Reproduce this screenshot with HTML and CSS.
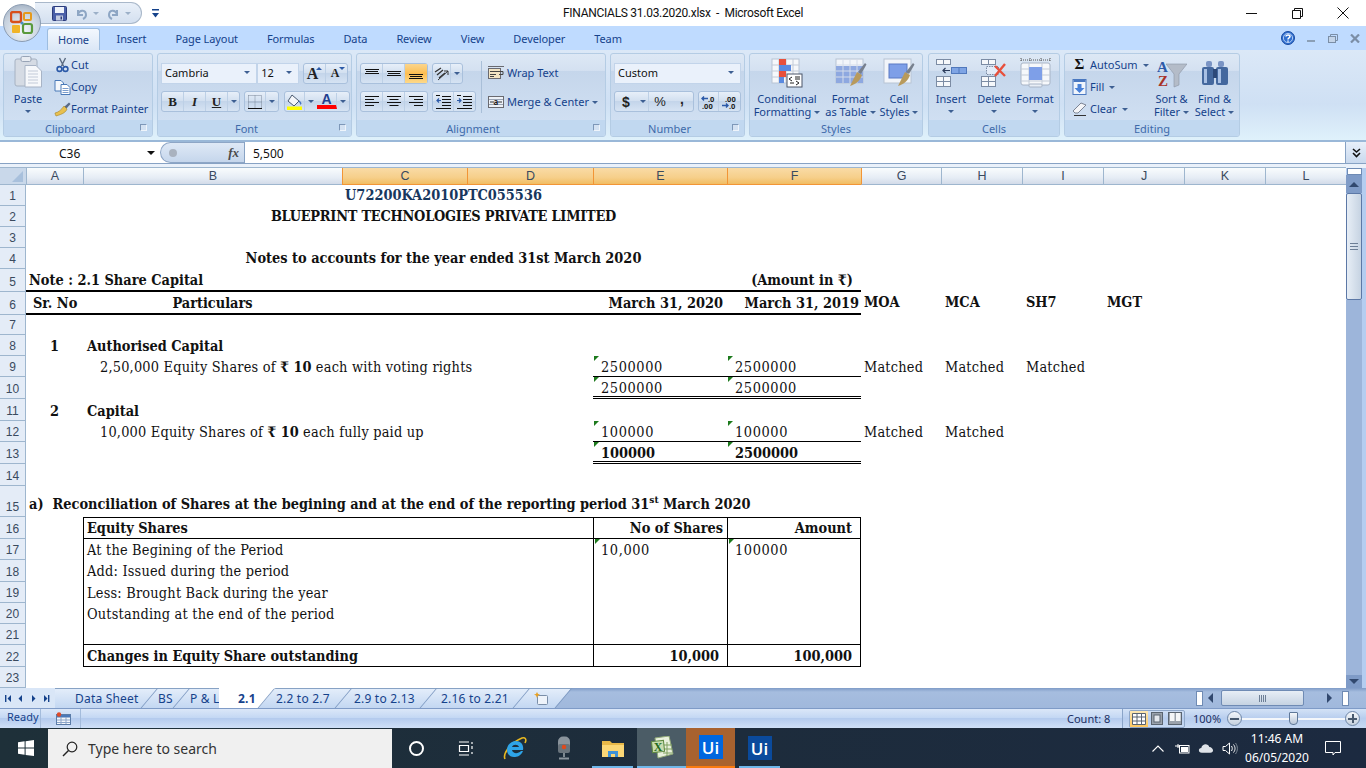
FILE: index.html
```html
<!DOCTYPE html>
<html lang="en">
<head>
  <meta charset="UTF-8" />
  <title>FINANCIALS 31.03.2020.xlsx - Microsoft Excel</title>
  <link rel="stylesheet" href="styles.css">
</head>
<body>

  <!-- Office orb sits over the title bar and the tab strip -->
  <div class="orb">
    <svg width="24" height="24" viewBox="0 0 24 24">
      <rect x="1" y="1" width="10" height="10" rx="2" fill="none" stroke="#d8501c" stroke-width="2.4"/>
      <rect x="14" y="2" width="7" height="7" rx="1" fill="none" stroke="#e59a1c" stroke-width="2"/>
      <rect x="2" y="14" width="8" height="8" rx="1" fill="#f0b428"/>
      <rect x="13" y="13" width="9" height="9" rx="2" fill="none" stroke="#5a9a3c" stroke-width="2.2"/>
      <circle cx="12" cy="12" r="1.6" fill="#4a8fc4"/>
    </svg>
  </div>

  <header class="titlebar">
    <div class="qat-wrap">
      <div class="qat">
        <svg width="15" height="15" viewBox="0 0 15 15"><rect x="0.5" y="0.5" width="14" height="14" rx="1" fill="#4a5fa8" stroke="#2c3c7c"/><rect x="3" y="1" width="9" height="6" fill="#eef2fa"/><rect x="4" y="9.5" width="7" height="5" fill="#c4cce0"/><rect x="8.5" y="10.5" width="1.5" height="3" fill="#2c3c7c"/></svg>
        <svg class="qat-dim" width="13" height="13" viewBox="0 0 13 13"><path d="M3 3 L3 8 L8 8 M3 7 C5 2 11 3 11 8 C11 10 10 11 8 12" fill="none" stroke="#8ea6c4" stroke-width="2"/></svg>
        <span class="caret caret-dim"></span>
        <svg class="qat-dim" width="13" height="13" viewBox="0 0 13 13"><path d="M10 3 L10 8 L5 8 M10 7 C8 2 2 3 2 8 C2 10 3 11 5 12" fill="none" stroke="#8ea6c4" stroke-width="2"/></svg>
        <span class="caret caret-dim"></span>
      </div>
      <svg class="qat-more" width="7" height="9" viewBox="0 0 7 9"><rect x="0" y="0" width="7" height="1.5" fill="#15428b"/><path d="M0 4 H7 L3.5 8.5 Z" fill="#15428b"/></svg>
    </div>
    <div class="doc-title">FINANCIALS 31.03.2020.xlsx &nbsp;-&nbsp; Microsoft Excel</div>
    <div class="win-controls">
      <span class="win-btn"><svg width="11" height="11" viewBox="0 0 11 11"><path d="M0 5.5 H11" stroke="#111" stroke-width="1"/></svg></span>
      <span class="win-btn"><svg width="11" height="11" viewBox="0 0 11 11"><path d="M0.5 2.5 H8.5 V10.5 H0.5 Z M2.5 2.5 V0.5 H10.5 V8.5 H8.5" fill="none" stroke="#111"/></svg></span>
      <span class="win-btn"><svg width="12" height="12" viewBox="0 0 12 12"><path d="M0.5 0.5 L11.5 11.5 M11.5 0.5 L0.5 11.5" stroke="#111"/></svg></span>
    </div>
  </header>

  <nav class="tabstrip">
    <span class="tab tab-active">Home</span>
    <span class="tab">Insert</span>
    <span class="tab">Page Layout</span>
    <span class="tab">Formulas</span>
    <span class="tab">Data</span>
    <span class="tab">Review</span>
    <span class="tab">View</span>
    <span class="tab">Developer</span>
    <span class="tab">Team</span>
    <div class="doc-controls">
      <svg width="14" height="14" viewBox="0 0 14 14"><circle cx="7" cy="7" r="6.5" fill="#2f6fd0" stroke="#1a4aa0"/><circle cx="7" cy="7" r="4.6" fill="none" stroke="#cfe0fa" stroke-width="0.8"/><path d="M5 5.4 C5 3.6 9 3.6 9 5.6 C9 7 7 6.8 7 8.4 M7 9.6 V10.8" fill="none" stroke="#fff" stroke-width="1.5"/></svg>
      <svg width="9" height="9" viewBox="0 0 9 9"><rect x="0" y="6" width="8" height="2" fill="#8b9fb6"/></svg>
      <svg width="10" height="9" viewBox="0 0 10 9"><rect x="0.5" y="2.5" width="7" height="6" fill="#c4d4e8" stroke="#7b8ea6"/><path d="M2.5 2.5 V0.5 H9.5 V6.5 H7.5" fill="none" stroke="#7b8ea6"/></svg>
      <svg width="10" height="9" viewBox="0 0 10 9"><path d="M1 0.5 L9 8.5 M9 0.5 L1 8.5" stroke="#7b8ea6" stroke-width="2.2"/></svg>
    </div>
  </nav>

  <section class="ribbon">

    <div class="group g-clipboard">
      <div class="group-body">
        <div class="large-btn paste-btn">
          <svg width="28" height="32" viewBox="0 0 28 32">
            <rect x="1" y="3" width="22" height="27" rx="2" fill="#d5dbe4" stroke="#a6b2c2"/>
            <rect x="7" y="0.5" width="10" height="5" rx="1.5" fill="#e8ecf2" stroke="#98a4b6"/>
            <path d="M11 9.5 H22 L27.5 15 V31 H11 Z" fill="#f6f8fb" stroke="#a8b4c6"/>
            <path d="M14 15 H24 M14 18 H24 M14 21 H24 M14 24 H24 M14 27 H24" stroke="#c2cad8"/>
          </svg>
          <span class="large-label">Paste</span>
          <span class="caret"></span>
        </div>
        <div class="small-col clip-col">
          <div class="small-btn">
            <svg width="14" height="16" viewBox="0 0 14 16"><path d="M4 1 L8 9 M10 1 L6 9" stroke="#5a6a80" stroke-width="1.4"/><circle cx="4" cy="12" r="2.4" fill="none" stroke="#2c5aa8" stroke-width="1.6"/><circle cx="10" cy="12" r="2.4" fill="none" stroke="#2c5aa8" stroke-width="1.6"/></svg>
            <span>Cut</span>
          </div>
          <div class="small-btn">
            <svg width="16" height="15" viewBox="0 0 16 15"><path d="M0.5 0.5 H6.5 L9 3 V11 H0.5 Z" fill="#f4f7fb" stroke="#4a7ab8"/><path d="M6.5 4.5 H12.5 L15.5 7.5 V14.5 H6.5 Z" fill="#fff" stroke="#4a7ab8"/><path d="M8 8.5 H14 M8 10.5 H14 M8 12.5 H14" stroke="#7a9ccc"/></svg>
            <span>Copy</span>
          </div>
          <div class="small-btn">
            <svg width="17" height="15" viewBox="0 0 17 15"><path d="M10 5 L15 0.5 L16.5 2 L12 7 Z" fill="#586a88"/><path d="M10 4 L13 7 C12 10 9 12 2 14 C1 12 1 11 1 11 C5 10 7 8 10 4 Z" fill="#e8c050" stroke="#a48428" stroke-width="0.6"/></svg>
            <span>Format Painter</span>
          </div>
        </div>
      </div>
      <div class="caption cap-l">Clipboard<span class="launcher"></span></div>
    </div>

    <div class="group g-font">
      <div class="group-body stack">
        <div class="row">
          <div class="select font-name"><span>Cambria</span><span class="caret"></span></div>
          <div class="select font-size"><span>12</span><span class="caret"></span></div>
          <div class="btn-set size-set">
            <span class="tool grow-a">A<i class="mini-up"></i></span>
            <span class="tool shrink-a">A<i class="mini-down"></i></span>
          </div>
        </div>
        <div class="row">
          <div class="btn-set biu-set">
            <span class="tool bold-b">B</span>
            <span class="tool italic-i">I</span>
            <span class="tool under-u">U</span>
            <span class="tool-caret"><span class="caret"></span></span>
          </div>
          <div class="btn-set border-set">
            <span class="tool">
              <svg width="14" height="14" viewBox="0 0 14 14"><path d="M0.5 0.5 H13.5 V13.5 M0.5 0.5 V13.5 M7 0.5 V13.5 M0.5 7 H13.5" fill="none" stroke="#7a8698" stroke-dasharray="1 1"/><path d="M0 13.5 H14" stroke="#111"/></svg>
            </span>
            <span class="tool-caret"><span class="caret"></span></span>
          </div>
          <div class="btn-set color-set">
            <span class="tool">
              <svg width="17" height="16" viewBox="0 0 17 16"><path d="M6 1 L13 7 L8 12 L2 7 Z" fill="#f4f6fa" stroke="#4a5a70"/><path d="M13 7 C15 9 15 10 14 10" fill="none" stroke="#4a78c0" stroke-width="1.6"/><rect x="1" y="12.5" width="15" height="3.5" fill="#ffff00"/></svg>
            </span>
            <span class="tool-caret"><span class="caret"></span></span>
            <span class="tool font-color">A</span>
            <span class="tool-caret"><span class="caret"></span></span>
          </div>
        </div>
      </div>
      <div class="caption cap-l">Font<span class="launcher"></span></div>
    </div>

    <div class="group g-align">
      <div class="group-body align-body">
        <div class="stack align-stack">
          <div class="row">
            <div class="btn-set">
              <span class="tool line-tool"><svg width="14" height="12" viewBox="0 0 14 12"><path d="M0 1.5 H14 M1 3.5 H13 M0 5.5 H14" stroke="#111"/></svg></span>
              <span class="tool line-tool"><svg width="14" height="12" viewBox="0 0 14 12"><path d="M0 3.5 H14 M1 5.5 H13 M0 7.5 H14" stroke="#111"/></svg></span>
              <span class="tool line-tool tool-on"><svg width="14" height="12" viewBox="0 0 14 12"><path d="M0 6.5 H14 M1 8.5 H13 M0 10.5 H14" stroke="#111"/></svg></span>
            </div>
            <div class="btn-set orient-set">
              <span class="tool"><svg width="15" height="14" viewBox="0 0 15 14"><path d="M1 5 L7 1 M3 8 L9 3 M5 11 L11 6" stroke="#333" stroke-width="1.3"/><path d="M4 13 L14 4 M14 4 H10 M14 4 V8" fill="none" stroke="#333"/></svg></span>
              <span class="tool-caret"><span class="caret"></span></span>
            </div>
          </div>
          <div class="row">
            <div class="btn-set">
              <span class="tool line-tool"><svg width="14" height="12" viewBox="0 0 14 12"><path d="M0 0.5 H14 M0 3.5 H9 M0 6.5 H14 M0 9.5 H9" stroke="#111"/></svg></span>
              <span class="tool line-tool"><svg width="14" height="12" viewBox="0 0 14 12"><path d="M0 0.5 H14 M2.5 3.5 H11.5 M0 6.5 H14 M2.5 9.5 H11.5" stroke="#111"/></svg></span>
              <span class="tool line-tool"><svg width="14" height="12" viewBox="0 0 14 12"><path d="M0 0.5 H14 M5 3.5 H14 M0 6.5 H14 M5 9.5 H14" stroke="#111"/></svg></span>
            </div>
            <div class="btn-set indent-set">
              <span class="tool"><svg width="15" height="14" viewBox="0 0 15 14"><path d="M6 1.5 H15 M6 4.5 H15 M6 7.5 H15 M6 10.5 H15 M0 13.5 H15 M0 0.5 H4" stroke="#111"/><path d="M5 5.5 H1 M3 3.5 L1 5.5 L3 7.5" fill="none" stroke="#2c5aa8" stroke-width="1.2"/></svg></span>
              <span class="tool"><svg width="15" height="14" viewBox="0 0 15 14"><path d="M6 1.5 H15 M6 4.5 H15 M6 7.5 H15 M6 10.5 H15 M0 13.5 H15 M0 0.5 H4" stroke="#111"/><path d="M0 5.5 H4 M2 3.5 L4 5.5 L2 7.5" fill="none" stroke="#2c5aa8" stroke-width="1.2"/></svg></span>
            </div>
          </div>
        </div>
        <div class="vsep"></div>
        <div class="stack merge-stack">
          <div class="small-btn">
            <svg width="16" height="14" viewBox="0 0 16 14"><rect x="0.5" y="2.5" width="12" height="10" fill="#f2e4c4" stroke="#6a6a70"/><path d="M2 5.5 H15 V8.5 H11 M2 8.5 H8 M2 10.5 H6" fill="none" stroke="#444"/><path d="M0 0.5 H16" stroke="#6a6a70"/></svg>
            <span>Wrap Text</span>
          </div>
          <div class="small-btn">
            <svg width="16" height="14" viewBox="0 0 16 14"><rect x="0.5" y="1.5" width="15" height="11" fill="#eef2f8" stroke="#6a6a70"/><path d="M1 4.5 H15 M1 9.5 H15" stroke="#9aa4b4"/><path d="M2 7 H6 M10 7 H14" stroke="#333"/><text x="8" y="10" font-size="8" font-weight="700" text-anchor="middle" fill="#222">a</text></svg>
            <span>Merge &amp; Center</span>
            <span class="caret"></span>
          </div>
        </div>
      </div>
      <div class="caption cap-l">Alignment<span class="launcher"></span></div>
    </div>

    <div class="group g-number">
      <div class="group-body stack">
        <div class="row">
          <div class="select number-format"><span>Custom</span><span class="caret"></span></div>
        </div>
        <div class="row">
          <div class="btn-set money-set">
            <span class="tool money">$</span>
            <span class="tool-caret"><span class="caret"></span></span>
            <span class="tool money percent">%</span>
            <span class="tool money comma">,</span>
          </div>
          <div class="btn-set dec-set">
            <span class="tool"><svg width="16" height="14" viewBox="0 0 16 14"><path d="M7 3.5 H1 M3 1.5 L1 3.5 L3 5.5" fill="none" stroke="#2c5aa8" stroke-width="1.4"/><text x="7" y="6.5" font-size="7.5" font-weight="700" fill="#222">.0</text><text x="1" y="13.5" font-size="7.5" font-weight="700" fill="#222">.00</text></svg></span>
            <span class="tool"><svg width="16" height="14" viewBox="0 0 16 14"><path d="M1 10.5 H7 M5 8.5 L7 10.5 L5 12.5" fill="none" stroke="#2c5aa8" stroke-width="1.4"/><text x="4" y="6.5" font-size="7.5" font-weight="700" fill="#222">.00</text><text x="8" y="13.5" font-size="7.5" font-weight="700" fill="#222">.0</text></svg></span>
          </div>
        </div>
      </div>
      <div class="caption cap-l">Number<span class="launcher"></span></div>
    </div>

    <div class="group g-styles">
      <div class="group-body wide-row">
        <div class="large-btn w-cond">
          <svg width="32" height="30" viewBox="0 0 32 30">
            <rect x="1" y="1" width="27" height="24" fill="#f6f8fb" stroke="#b8c4d4"/>
            <path d="M1 7 H28 M1 13 H28 M1 19 H28 M8 1 V25 M15 1 V25 M22 1 V25" stroke="#c4ccd8"/>
            <rect x="8" y="1" width="7" height="6" fill="#e8503c"/>
            <rect x="8" y="7" width="12" height="6" fill="#5a8ae0"/>
            <rect x="8" y="13" width="7" height="6" fill="#e8503c"/>
            <rect x="8" y="19" width="5" height="6" fill="#5a8ae0"/>
            <rect x="16" y="16" width="15" height="13" fill="#fff" stroke="#4a5568"/>
            <path d="M21 19 L18 21 L21 23 M19 25 H23 M24 19 H29 M24 21 H29 M25 23 L28 25 L25 27" fill="none" stroke="#222"/>
          </svg>
          <span class="large-label">Conditional<br>Formatting<span class="caret"></span></span>
        </div>
        <div class="large-btn w-table">
          <svg width="32" height="30" viewBox="0 0 32 30">
            <rect x="1" y="1" width="27" height="24" fill="#f2f5fa" stroke="#b8c4d4"/>
            <rect x="1" y="8" width="27" height="17" fill="#8ea8e0"/>
            <path d="M1 7 H28 M1 13 H28 M1 19 H28 M8 1 V25 M15 1 V25 M22 1 V25" stroke="#d4dcea"/>
            <path d="M23 14 L30 5 L31.5 6.5 L26 16 Z" fill="#77808e"/>
            <path d="M22 14 L27 17 C25 23 21 26 15 28 C17 24 19 20 22 14 Z" fill="#b89a5c"/>
          </svg>
          <span class="large-label">Format<br>as Table<span class="caret"></span></span>
        </div>
        <div class="large-btn w-cell">
          <svg width="32" height="30" viewBox="0 0 32 30">
            <rect x="1" y="1" width="27" height="24" fill="#f2f5fa" stroke="#b8c4d4"/>
            <rect x="6" y="6" width="18" height="14" fill="#7e9fe8" stroke="#5a7ac4"/>
            <path d="M23 14 L30 5 L31.5 6.5 L26 16 Z" fill="#77808e"/>
            <path d="M22 14 L27 17 C25 23 21 26 15 28 C17 24 19 20 22 14 Z" fill="#b89a5c"/>
          </svg>
          <span class="large-label">Cell<br>Styles<span class="caret"></span></span>
        </div>
      </div>
      <div class="caption">Styles</div>
    </div>

    <div class="group g-cells">
      <div class="group-body cells-row">
        <div class="large-btn w-ins">
          <svg width="31" height="28" viewBox="0 0 31 28">
            <rect x="0.5" y="0.5" width="14" height="5" fill="#f6f8fb" stroke="#7c8ca4"/><path d="M7.5 0.5 V5.5" stroke="#7c8ca4"/>
            <rect x="0.5" y="17.5" width="14" height="10" fill="#f6f8fb" stroke="#7c8ca4"/><path d="M7.5 17.5 V27.5 M0.5 22.5 H14.5" stroke="#7c8ca4"/>
            <rect x="15.5" y="8.5" width="15" height="6" fill="#7ea4e4" stroke="#5078bc"/><path d="M23 8.5 V14.5" stroke="#5078bc"/>
            <path d="M14 11.5 H7 M9.5 9 L7 11.5 L9.5 14" fill="none" stroke="#2a3a5a" stroke-width="1.2"/>
          </svg>
          <span class="large-label">Insert</span>
          <span class="caret"></span>
        </div>
        <div class="large-btn w-del">
          <svg width="26" height="28" viewBox="0 0 26 28">
            <rect x="0.5" y="0.5" width="14" height="5" fill="#f6f8fb" stroke="#7c8ca4"/><path d="M7.5 0.5 V5.5" stroke="#7c8ca4"/>
            <rect x="5.5" y="7.5" width="12" height="8" fill="#e4ecf8" stroke="#7c8ca4" stroke-dasharray="1.5 1"/>
            <rect x="0.5" y="17.5" width="14" height="10" fill="#f6f8fb" stroke="#7c8ca4"/><path d="M7.5 17.5 V27.5 M0.5 22.5 H14.5" stroke="#7c8ca4"/>
            <path d="M14 7 L24 17 M24 5 L14 17" stroke="#e8503c" stroke-width="2.4"/>
          </svg>
          <span class="large-label">Delete</span>
          <span class="caret"></span>
        </div>
        <div class="large-btn w-fmt">
          <svg width="31" height="30" viewBox="0 0 31 30">
            <path d="M1 2 H30 M1 0 V4 M30 0 V4 M10 0 V4 M21 0 V4" stroke="#555" stroke-dasharray="1 1"/>
            <rect x="1" y="5" width="29" height="22" rx="2" fill="#f6f8fb" stroke="#a8b4c6"/>
            <path d="M1 11 H30 M1 17 H30 M1 23 H30 M9 5 V27 M22 5 V27" stroke="#c4ccd8"/>
            <rect x="9" y="9" width="13" height="13" fill="#7e9fe8"/>
            <rect x="9" y="26" width="13" height="3" rx="1" fill="#e8eef6" stroke="#a8b4c6"/>
          </svg>
          <span class="large-label">Format</span>
          <span class="caret"></span>
        </div>
      </div>
      <div class="caption">Cells</div>
    </div>

    <div class="group g-edit">
      <div class="group-body edit-body">
        <div class="small-col edit-col">
          <div class="small-btn"><span class="sigma">Σ</span><span>AutoSum</span><span class="caret"></span></div>
          <div class="small-btn">
            <svg width="14" height="16" viewBox="0 0 14 16"><rect x="0.5" y="0.5" width="13" height="15" fill="#f0f5fc" stroke="#4a78c0"/><rect x="1" y="1" width="12" height="2" fill="#4a78c0"/><path d="M5 5 H9 V9 H12 L7 14 L2 9 H5 Z" fill="#4a82d8"/></svg>
            <span>Fill</span><span class="caret"></span>
          </div>
          <div class="small-btn">
            <svg width="15" height="14" viewBox="0 0 15 14"><path d="M1 9 L9 1 L14 3 L6 11 L3 11 Z" fill="#f4f5f8" stroke="#7c8494"/><path d="M2 13.5 H14" stroke="#333"/></svg>
            <span>Clear</span><span class="caret"></span>
          </div>
        </div>
        <div class="large-btn w-sort">
          <svg width="30" height="30" viewBox="0 0 30 30">
            <path d="M9 6 H30 L22 16 V27 L17 29 V16 Z" fill="#b4bcc8" stroke="#8a94a4" stroke-width="0.6"/>
            <text x="0" y="14" font-family="Liberation Serif" font-size="15" font-weight="700" fill="#2c5aa8">A</text>
            <text x="1" y="28" font-family="Liberation Serif" font-size="15" font-weight="700" fill="#a83228">Z</text>
          </svg>
          <span class="large-label">Sort &amp;<br>Filter<span class="caret"></span></span>
        </div>
        <div class="large-btn w-find">
          <svg width="28" height="26" viewBox="0 0 28 26">
            <rect x="5" y="1" width="6" height="6" rx="2" fill="#7a94c4"/><rect x="17" y="1" width="6" height="6" rx="2" fill="#7a94c4"/>
            <rect x="1" y="7" width="12" height="18" rx="2" fill="#44689e"/><rect x="15" y="7" width="12" height="18" rx="2" fill="#44689e"/>
            <rect x="3" y="9" width="3" height="14" fill="#a8c0e4"/><rect x="17" y="9" width="3" height="14" fill="#a8c0e4"/>
            <rect x="12" y="9" width="4" height="9" fill="#2c4878"/>
          </svg>
          <span class="large-label">Find &amp;<br>Select<span class="caret"></span></span>
        </div>
      </div>
      <div class="caption">Editing</div>
    </div>
  </section>

  <section class="formula-bar">
    <div class="name-box"><span class="name-text">C36</span><span class="name-caret"></span></div>
    <div class="fx-pill">
      <span class="fx-dot"></span>
      <span class="fx">fx</span>
    </div>
    <div class="formula-input">5,500</div>
    <div class="formula-expand">
      <svg width="9" height="10" viewBox="0 0 9 10"><path d="M1 1 L4.5 4 L8 1 M1 5 L4.5 8.5 L8 5" fill="none" stroke="#111" stroke-width="1.6"/></svg>
    </div>
  </section>

  <main class="sheet-wrap">
    <div class="sheet-clip">
      <table class="sheet">
        <colgroup>
          <col class="col-rh"><col class="col-a"><col class="col-b"><col class="col-c"><col class="col-d"><col class="col-e"><col class="col-e">
          <col class="col-g1"><col class="col-g"><col class="col-g"><col class="col-g"><col class="col-g"><col class="col-g">
        </colgroup>
        <thead>
          <tr>
            <th class="corner"><span class="corner-mark"></span></th>
            <th>A</th><th>B</th>
            <th class="sel">C</th><th class="sel">D</th><th class="sel">E</th><th class="sel">F</th>
            <th class="sel-end">G</th><th>H</th><th>I</th><th>J</th><th>K</th><th>L</th>
          </tr>
        </thead>
        <tbody>
          <tr class="up"><th>1</th><td colspan="6" class="center bold navy">U72200KA2010PTC055536</td></tr>
          <tr class="up"><th>2</th><td colspan="6" class="center bold caps">BLUEPRINT TECHNOLOGIES PRIVATE LIMITED</td></tr>
          <tr><th>3</th></tr>
          <tr class="up"><th>4</th><td colspan="6" class="center bold">Notes to accounts for the year ended 31st March 2020</td></tr>
          <tr class="h23"><th>5</th><td colspan="5" class="bold thick note">Note : 2.1 Share Capital</td><td class="bold thick right amount">(Amount in ₹)</td></tr>
          <tr class="h23">
            <th>6</th>
            <td class="bold thick srno">Sr. No</td>
            <td class="bold thick center">Particulars</td>
            <td class="thick"></td><td class="thick"></td>
            <td class="bold thick right">March 31, 2020</td>
            <td class="bold thick right tight">March 31, 2019</td>
            <td class="bold lift gcol">MOA</td><td class="bold lift">MCA</td><td class="bold lift">SH7</td><td class="bold lift">MGT</td>
          </tr>
          <tr class="h20"><th>7</th></tr>
          <tr><th>8</th><td class="bold center">1</td><td class="bold">Authorised Capital</td></tr>
          <tr>
            <th>9</th><td></td>
            <td class="indent">2,50,000 Equity Shares of <b>₹ 10</b> each with voting rights</td>
            <td></td><td></td>
            <td class="num flag line">2500000</td><td class="num flag line">2500000</td>
            <td class="gcol">Matched</td><td>Matched</td><td>Matched</td>
          </tr>
          <tr class="h22"><th>10</th><td colspan="4"></td><td class="num flag dbl">2500000</td><td class="num flag dbl">2500000</td></tr>
          <tr class="h22"><th>11</th><td class="bold center">2</td><td class="bold">Capital</td></tr>
          <tr>
            <th>12</th><td></td>
            <td class="indent">10,000 Equity Shares of <b>₹ 10</b> each fully paid up</td>
            <td></td><td></td>
            <td class="num flag line">100000</td><td class="num flag line">100000</td>
            <td class="gcol">Matched</td><td>Matched</td>
          </tr>
          <tr class="h22"><th>13</th><td colspan="4"></td><td class="num flag dbl bold">100000</td><td class="num flag dbl bold">2500000</td></tr>
          <tr class="h22"><th>14</th></tr>
          <tr class="h31"><th>15</th><td colspan="12" class="bold note recon-title">a)&nbsp; Reconciliation of Shares at the begining and at the end of the reporting period 31<sup>st</sup> March 2020</td></tr>
          <tr class="h22 recon-head">
            <th>16</th><td></td>
            <td colspan="3" class="lead bold">Equity Shares</td>
            <td class="mid bold right">No of Shares</td>
            <td class="end bold right amount">Amount</td>
          </tr>
          <tr>
            <th>17</th><td></td>
            <td colspan="3" class="lead">At the Begining of the Period</td>
            <td class="mid num flag">10,000</td>
            <td class="end num flag">100000</td>
          </tr>
          <tr class="h22 up"><th>18</th><td></td><td colspan="3" class="lead">Add: Issued during the period</td><td class="mid"></td><td class="end"></td></tr>
          <tr><th>19</th><td></td><td colspan="3" class="lead">Less: Brought Back during the year</td><td class="mid"></td><td class="end"></td></tr>
          <tr><th>20</th><td></td><td colspan="3" class="lead">Outstanding at the end of the period</td><td class="mid"></td><td class="end"></td></tr>
          <tr class="recon-rule"><th>21</th><td></td><td colspan="3" class="lead"></td><td class="mid"></td><td class="end"></td></tr>
          <tr class="h22 recon-rule">
            <th>22</th><td></td>
            <td colspan="3" class="lead bold">Changes in Equity Share outstanding</td>
            <td class="mid bold right amount">10,000</td>
            <td class="end bold right amount">100,000</td>
          </tr>
          <tr><th>23</th></tr>
        </tbody>
      </table>
    </div>

    <aside class="vscroll">
      <span class="v-split"></span>
      <span class="v-arrow"><i class="arrow-up"></i></span>
      <span class="v-thumb"><i class="grip"></i></span>
      <span class="v-track"></span>
      <span class="v-arrow v-arrow-down"><i class="arrow-down"></i></span>
    </aside>
  </main>

  <section class="sheetbar">
    <div class="sheet-nav">
      <svg width="50" height="9" viewBox="0 0 50 9" fill="#15428b"><rect x="5" y="1" width="1.4" height="7"/><path d="M11 1 V8 L7.5 4.5 Z M22 1 V8 L18.5 4.5 Z M32 1 V8 L35.5 4.5 Z M44 1 V8 L47.5 4.5 Z"/><rect x="48" y="1" width="1.4" height="7"/></svg>
    </div>
    <div class="sheet-tabs">
      <span class="sheet-tab st-data">Data Sheet</span>
      <span class="sheet-tab st-bs">BS</span>
      <span class="sheet-tab st-pl">P &amp; L</span>
      <span class="sheet-tab sheet-tab-on">2.1</span>
      <span class="sheet-tab st-22">2.2 to 2.7</span>
      <span class="sheet-tab st-29">2.9 to 2.13</span>
      <span class="sheet-tab st-216">2.16 to 2.21</span>
      <span class="sheet-tab st-new">
        <svg width="14" height="13" viewBox="0 0 14 13"><rect x="3.5" y="3.5" width="10" height="9" rx="1" fill="#eef3fa" stroke="#7a8ea8"/><path d="M3 0 L4 2 L6 2.5 L4 3.5 L3 6 L2 3.5 L0 2.5 L2 2 Z" fill="#e8a020"/></svg>
      </span>
    </div>
    <div class="hscroll">
      <span class="h-split"></span>
      <i class="arrow-left"></i>
      <span class="h-thumb"><i class="grip-v"></i></span>
      <i class="arrow-right"></i>
      <span class="h-split"></span>
    </div>
  </section>

  <footer class="statusbar">
    <span class="st-ready">Ready</span>
    <span class="st-macro">
      <svg width="15" height="13" viewBox="0 0 15 13"><rect x="0.5" y="2.5" width="14" height="10" fill="#f4f7fb" stroke="#5a7ca8"/><rect x="1" y="3" width="13" height="2.5" fill="#4a78b8"/><path d="M1 8 H14 M1 10.5 H14 M5 5 V12 M10 5 V12" stroke="#8aa4c8"/><circle cx="3" cy="2.5" r="2.2" fill="#e04a28"/></svg>
    </span>
    <span class="st-count">Count: 8</span>
    <div class="st-right">
      <div class="views">
        <span class="view view-on"><svg width="14" height="12" viewBox="0 0 14 12"><path d="M0.5 0.5 H13.5 V11.5 H0.5 Z M0.5 4 H13.5 M0.5 8 H13.5 M5 0.5 V11.5 M9.5 0.5 V11.5" fill="#fff" stroke="#5a6470"/></svg></span>
        <span class="view"><svg width="12" height="13" viewBox="0 0 12 13"><rect x="0.5" y="0.5" width="11" height="12" fill="#9aa2ac" stroke="#5a6470"/><rect x="3" y="3" width="6" height="7" fill="#e4e8ee" stroke="#5a6470"/></svg></span>
        <span class="view"><svg width="14" height="13" viewBox="0 0 14 13"><rect x="0.5" y="0.5" width="13" height="12" fill="#9aa2ac" stroke="#5a6470"/><rect x="2" y="1" width="4.5" height="8" fill="#f4f6f8"/><rect x="8" y="1" width="4.5" height="8" fill="#f4f6f8"/></svg></span>
      </div>
      <span class="zoom-pct">100%</span>
      <span class="zoom-btn"><i></i></span>
      <span class="zoom-track"><span class="zoom-thumb"></span></span>
      <span class="zoom-btn zoom-plus"><i></i></span>
    </div>
  </footer>

  <footer class="taskbar">
    <span class="tb-start">
      <svg width="16" height="16" viewBox="0 0 16 16" fill="#fff"><path d="M0 2.3 L6.6 1.3 V7.6 H0 Z M7.6 1.2 L16 0 V7.6 H7.6 Z M0 8.5 H6.6 V14.8 L0 13.8 Z M7.6 8.5 H16 V16 L7.6 14.9 Z"/></svg>
    </span>
    <div class="tb-search">
      <svg width="16" height="16" viewBox="0 0 16 16"><circle cx="10" cy="6" r="4.8" fill="none" stroke="#222" stroke-width="1.2"/><path d="M6.5 9.5 L1 15" stroke="#222" stroke-width="1.4"/></svg>
      <span>Type here to search</span>
    </div>
    <span class="tb-item"><i class="cortana-ring"></i></span>
    <span class="tb-item">
      <svg width="16" height="15" viewBox="0 0 16 15"><path d="M1 1 H11 M1 14 H11 M1.5 4.5 H10.5 V10.5 H1.5 Z M14 1 V3 M14 5 V8 M14 11 V13" fill="none" stroke="#fff" stroke-width="1.2"/></svg>
    </span>
    <span class="tb-item">
      <svg width="24" height="24" viewBox="0 0 24 24"><path d="M2 23 C0 19 5 8 19 2 C22 1 24 3 22 7" fill="none" stroke="#e8b820" stroke-width="1.6"/><path d="M4 14 C4 8 9 5 13 5 C18 5 21 9 20 14 H9 C10 18 15 18 18 15 H20 C18 20 14 21 11 21 C7 21 4 18 4 14 Z M9 11 H16 C15 8 10 8 9 11 Z" fill="#2ea4e8" fill-rule="evenodd"/></svg>
    </span>
    <span class="tb-item">
      <svg width="14" height="24" viewBox="0 0 14 24"><rect x="1" y="0.5" width="12" height="16" rx="5" fill="#8a949c"/><rect x="1" y="8" width="12" height="9" rx="2" fill="#6a747c"/><circle cx="7" cy="11" r="2.2" fill="#e04a1c"/><path d="M7 17 V21 M2 22.5 H12" stroke="#8a949c" stroke-width="1.8"/></svg>
    </span>
    <span class="tb-item tb-running">
      <svg width="22" height="18" viewBox="0 0 22 18"><path d="M0 2 H8 L10 4 H22 V18 H0 Z" fill="#e8b848"/><rect x="0" y="6" width="22" height="12" fill="#fbd776"/><path d="M6 18 V12 H16 V18 H13 V15 H9 V18 Z" fill="#3f93d8"/></svg>
    </span>
    <span class="tb-item tb-running tb-excel">
      <svg width="24" height="24" viewBox="0 0 24 24"><path d="M5 2 L19 0 L23 18 L8 22 Z" fill="#e8f0dc" stroke="#90a878"/><path d="M13 9 H22 M13 13 H22 M13 17 H22 M17 6 V20" stroke="#7ea060"/><rect x="2" y="5" width="12" height="11" fill="#c8dcb0" stroke="#5f8a40" transform="rotate(-6 8 10)"/><text x="8" y="14.5" font-family="Liberation Serif" font-size="12" font-weight="700" text-anchor="middle" fill="#1f6a20">X</text></svg>
    </span>
    <span class="tb-item tb-ui-on"><span class="ui-logo">Ui</span></span>
    <span class="tb-item tb-running"><span class="ui-logo ui-dark">Ui</span></span>
    <div class="tray">
      <svg width="12" height="7" viewBox="0 0 12 7"><path d="M0.5 6.5 L6 1 L11.5 6.5" fill="none" stroke="#fff" stroke-width="1.1"/></svg>
      <svg class="tray-power" width="15" height="11" viewBox="0 0 15 11"><rect x="4.5" y="2.5" width="9.5" height="7.5" fill="none" stroke="#fff"/><rect x="6" y="4" width="7" height="5" fill="#fff"/><path d="M0 3 H4 M3 1 V5" stroke="#fff"/></svg>
      <svg class="tray-cloud" width="16" height="10" viewBox="0 0 17 10"><path d="M4 10 C0 10 0 5 3.5 5 C4.5 0 11 0 12 4 C16 4 18 10 13 10 Z" fill="#dfe3e8"/></svg>
      <svg class="tray-sound" width="16" height="13" viewBox="0 0 15 13"><path d="M0.5 4.5 H3 L7 1 V12 L3 8.5 H0.5 Z" fill="none" stroke="#fff"/><path d="M9 4 C10 5.5 10 7.5 9 9 M11 2.5 C13 5 13 8 11 10.5" fill="none" stroke="#fff"/><path d="M13 1 C15.5 4.5 15.5 8.5 13 12" fill="none" stroke="#7f8a96"/></svg>
      <div class="clock"><span>11:46 AM</span><span>06/05/2020</span></div>
      <svg class="tray-note" width="16" height="15" viewBox="0 0 16 15"><path d="M0.5 0.5 H15.5 V11.5 H10 L8 14 L8 11.5 H0.5 Z" fill="none" stroke="#fff"/></svg>
    </div>
  </footer>

</body>
</html>
```
FILE: styles.css
```css
/* Reset */
*, *::before, *::after {
  box-sizing: border-box;
}
body {
  margin: 0;
  width: 1366px;
  height: 768px;
  overflow: hidden;
  display: flex;
  flex-direction: column;
  position: relative;
  background: #fff;
  font-family: "Noto Sans", sans-serif;
  font-size: 11px;
  color: #15428b;
}
svg { display: block; flex: none; }
.caret {
  display: inline-block;
  width: 0;
  height: 0;
  border: 3px solid transparent;
  border-top: 3px solid #3d5f92;
  border-bottom: 0;
  flex: none;
}
.caret-dim { border-top-color: #9cb0c8; }

/* Title bar */
.orb {
  position: absolute;
  left: 3px;
  top: 4px;
  width: 38px;
  height: 38px;
  border-radius: 50%;
  background: radial-gradient(circle at 50% 70%, #f4f8fc, #c4cfdc 62%, #8f9fb3);
  border: 1px solid #8b9cb2;
  display: flex;
  align-items: center;
  justify-content: center;
  z-index: 3;
}
.titlebar {
  height: 26px;
  display: grid;
  grid-template-columns: 1fr auto 1fr;
  align-items: center;
  background: #fff;
  flex: none;
}
.qat-wrap { display: flex; align-items: center; }
.qat {
  margin-left: 35px;
  width: 107px;
  height: 22px;
  padding-left: 17px;
  display: flex;
  align-items: center;
  gap: 5px;
  background: linear-gradient(#e9f0f9, #d4e0f0);
  border: 1px solid #a9b8ca;
  border-left: 0;
  border-radius: 0 12px 12px 0;
}
.qat-dim { margin-left: 3px; }
.qat-more { margin-left: 10px; }
.doc-title {
  font-family: Roboto, sans-serif;
  font-size: 12px;
  letter-spacing: -0.28px;
  color: #111;
}
.win-controls { display: flex; justify-content: flex-end; }
.win-btn {
  width: 46px;
  height: 26px;
  display: flex;
  align-items: center;
  justify-content: center;
}

/* Tab strip */
.tabstrip {
  height: 24px;
  flex: none;
  display: flex;
  align-items: flex-end;
  padding-left: 47px;
  background: #bfdbff;
}
.tab {
  height: 22px;
  padding: 2px 14.5px 0;
  font-size: 11px;
  line-height: 18px;
  letter-spacing: -0.1px;
}
.tab-active {
  width: 53px;
  padding: 2px 0 0;
  text-align: center;
  margin-right: 2px;
  background: linear-gradient(#f3f8fe, #dbe7f6);
  border: 1px solid #9dbde0;
  border-bottom: 0;
  border-radius: 3px 3px 0 0;
}
.doc-controls {
  margin-left: auto;
  align-self: center;
  display: flex;
  align-items: center;
  gap: 12px;
  padding-right: 6px;
}

/* Ribbon */
.ribbon {
  height: 92px;
  flex: none;
  display: flex;
  gap: 4px;
  padding: 3px 0 3px 3px;
  background: linear-gradient(#dbe8f7, #cfe0f4 60%, #dff1fb);
  border-bottom: 2px solid #9ab8d8;
}
.group {
  display: flex;
  flex-direction: column;
  border: 1px solid #b4cce4;
  border-radius: 3px;
  background: linear-gradient(#dde8f5, #d4e1f1 20%, #c5d6eb 21%, #d3e2f4);
  overflow: hidden;
}
.g-clipboard { width: 150px; }
.g-font { width: 195px; }
.g-align { width: 250px; }
.g-number { width: 135px; }
.g-styles { width: 174px; }
.g-cells { width: 132px; margin-left: 1px; }
.g-edit { width: 176px; }
.group-body { flex: 1; display: flex; min-height: 0; }
.caption {
  height: 16px;
  flex: none;
  position: relative;
  text-align: center;
  line-height: 17px;
  color: #3e6aaa;
  background: #c1d8f0;
}
.cap-l { padding-right: 16px; }
.launcher {
  position: absolute;
  right: 5px;
  top: 4px;
  width: 7px;
  height: 7px;
  border: 1px solid #7d97b8;
  border-right-color: #eef4fb;
  border-bottom-color: #eef4fb;
  background: #d3e1f2;
}
.stack {
  flex-direction: column;
  justify-content: space-between;
  padding: 9px 3px 8px;
}
.row { display: flex; gap: 4px; height: 21px; }
.select {
  height: 21px;
  display: flex;
  align-items: center;
  justify-content: space-between;
  padding: 0 6px 2px 3px;
  background: #eaf1fb;
  border: 1px solid #c2d4ea;
  color: #111;
}
.font-name { width: 97px; }
.font-size { width: 42px; margin-left: -4px; }
.size-set { width: 45px; }
.number-format { width: 127px; }
.btn-set {
  height: 21px;
  display: flex;
  align-items: stretch;
  border: 1px solid #a9c0dc;
  border-radius: 3px;
  background: linear-gradient(#e7eff9, #d3e0f0 45%, #c4d5ea 50%, #d6e3f3);
}
.tool {
  min-width: 22px;
  display: flex;
  align-items: center;
  justify-content: center;
  color: #222;
  position: relative;
  border-right: 1px solid #bdd0e6;
}
.tool:last-child { border-right: 0; }
.tool-on { background: linear-gradient(#fbd58c, #fdbe52 50%, #fdd98a); }
.line-tool { width: 22px; }
.tool-caret {
  width: 13px;
  display: flex;
  align-items: center;
  justify-content: center;
  border-right: 1px solid #bdd0e6;
}
.tool-caret:last-child { border-right: 0; }
.grow-a, .shrink-a { font-family: "Liberation Serif", serif; font-weight: 700; }
.grow-a { font-size: 16px; padding-right: 4px; }
.shrink-a { font-size: 12px; padding-right: 4px; }
.mini-up, .mini-down {
  position: absolute;
  right: 3px;
  top: 3px;
  border: 3px solid transparent;
}
.mini-up { border-bottom: 3px solid #2c5aa8; border-top: 0; }
.mini-down { border-top: 3px solid #2c5aa8; border-bottom: 0; }
.bold-b, .italic-i, .under-u { font-family: "Liberation Serif", serif; font-size: 13px; font-weight: 700; }
.italic-i { font-style: italic; }
.under-u { text-decoration: underline; }
.biu-set { width: 79px; }
.biu-set .tool { width: 22px; }
.border-set { width: 35px; }
.border-set .tool { min-width: 21px; width: 21px; }
.color-set { width: 66px; margin-left: 1px; }
.color-set .tool { min-width: 20px; width: 20px; }
.color-set .tool-caret { border-right: 0; }
.font-color {
  font-family: "Liberation Sans", sans-serif;
  font-size: 14px;
  font-weight: 700;
  color: #1f3f8f;
  line-height: 13px;
  border-bottom: 4px solid #f00;
  margin: 1px 0 2px;
  align-items: flex-start;
}
.align-stack { display: flex; width: 124px; }
.orient-set { width: 31px; }
.orient-set .tool { min-width: 18px; width: 18px; }
.orient-set .tool-caret { width: 11px; }
.indent-set { width: 44px; }
.indent-set .tool { min-width: 21px; }
.vsep {
  width: 1px;
  margin: 7px 0;
  background: #a9bfd8;
}
.merge-stack { display: flex; padding-left: 6px; }
.merge-stack .small-btn { height: 20px; }
.money-set { width: 80px; }
.money { font-family: "Liberation Sans", sans-serif; font-size: 14px; font-weight: 700; min-width: 22px; border-right: 0; }
.percent { font-size: 13px; font-weight: 400; }
.comma { padding-bottom: 6px; }
.dec-set { width: 43px; }
.dec-set .tool { min-width: 20px; }

/* Big buttons and small icon rows */
.large-btn {
  display: flex;
  flex-direction: column;
  align-items: center;
  padding-top: 4px;
  line-height: 13px;
  text-align: center;
}
.large-btn svg { height: 30px; }
.large-label { margin-top: 4px; white-space: nowrap; }
.large-label .caret { margin-left: 3px; vertical-align: 2px; }
.large-btn > .caret { margin-top: 5px; }
.paste-btn { width: 48px; padding-top: 2px; }
.paste-btn svg { height: 32px; }
.small-col { display: flex; flex-direction: column; }
.clip-col { padding-left: 2px; }
.small-btn {
  height: 22px;
  display: flex;
  align-items: center;
  gap: 3px;
  white-space: nowrap;
}
.small-btn > span { margin-top: -2px; }
.small-btn > .caret { margin-top: 0; }
.clip-col .small-btn { gap: 0; }
.clip-col .small-btn svg { width: 17px; }
.wide-row { padding-left: 2px; }
.cells-row { padding-left: 0; }
.w-cond { width: 70px; }
.w-table { width: 57px; }
.w-cell { width: 40px; }
.w-ins { width: 44px; }
.w-del { width: 42px; }
.w-fmt { width: 40px; }
.edit-body { padding-left: 6px; }
.edit-col { width: 79px; }
.edit-col .small-btn { gap: 2px; }
.edit-col .small-btn > :first-child { width: 17px; }
.edit-col .caret { margin-left: 3px; }
.sigma {
  font-family: "Liberation Serif", serif;
  font-size: 15px;
  font-weight: 700;
  color: #111;
  text-align: center;
}
.w-sort { width: 43px; }
.w-find { width: 43px; }

/* Formula bar */
.formula-bar {
  height: 22px;
  flex: none;
  display: flex;
  align-items: stretch;
  background: #fff;
  border-bottom: 1px solid #87a2c4;
  font-size: 12px;
  color: #111;
}
.name-box {
  width: 160px;
  display: flex;
  align-items: center;
  position: relative;
  padding: 2px 0 0 59px;
}
.name-caret {
  position: absolute;
  right: 5px;
  top: 9px;
  border: 4px solid transparent;
  border-top: 4px solid #111;
  border-bottom: 0;
}
.fx-pill {
  width: 84px;
  display: flex;
  align-items: center;
  justify-content: space-between;
  padding: 0 5px 0 8px;
  background: linear-gradient(#dfe9f6, #c5d6ec);
  border: 1px solid #8ea6c6;
  border-right: 0;
  border-radius: 11px 0 0 11px;
}
.fx-dot {
  width: 8px;
  height: 8px;
  border-radius: 50%;
  background: #a9b2bf;
}
.fx {
  font-family: "Liberation Serif", serif;
  font-style: italic;
  font-weight: 700;
  font-size: 13px;
  color: #4a4a4a;
}
.formula-input {
  flex: 1;
  padding: 3px 0 0 8px;
  border-left: 1px solid #87a2c4;
  line-height: 17px;
}
.formula-expand {
  width: 21px;
  display: flex;
  align-items: center;
  justify-content: center;
  background: linear-gradient(#e8f0fa, #c9d9ee);
  border-left: 1px solid #87a2c4;
}

/* Sheet */
.sheet-wrap {
  height: 524px;
  flex: none;
  display: flex;
  padding-top: 3px;
  background: #eaf1fa;
}
.sheet-clip {
  width: 1346px;
  height: 521px;
  overflow: hidden;
  background: #fff;
  border-top: 1px solid #9eb6ce;
}
.sheet {
  width: 1346px;
  table-layout: fixed;
  border-collapse: separate;
  border-spacing: 0;
  font-family: "DejaVu Serif Condensed", "DejaVu Serif", serif;
  font-size: 14.4px;
  color: #111;
}
.col-rh { width: 26px; }
.col-a { width: 57px; }
.col-b { width: 259px; }
.col-c { width: 125px; }
.col-d { width: 126px; }
.col-e { width: 134px; }
.col-g1 { width: 80px; }
.col-g { width: 81px; }
.sheet thead th {
  height: 17px;
  padding: 0;
  font: 400 12.5px/16px "Liberation Sans", sans-serif;
  color: #3a4a5e;
  background: linear-gradient(#f9fcfd, #e6edf5 60%, #d3dbe9);
  border-left: 1px solid #9eb6ce;
  border-bottom: 1px solid #9eb6ce;
}
.sheet thead th.sel {
  background: linear-gradient(#f9dba6, #f6cf8a 60%, #f1bd63);
  border-left-color: #f29536;
  border-bottom-color: #f29536;
}
.sheet thead th.sel-end { border-left-color: #f29536; }
.sheet thead th.corner {
  position: relative;
  background: #c9d8ea;
  border-left: 0;
}
.corner-mark {
  position: absolute;
  right: 3px;
  bottom: 2px;
  border-left: 11px solid transparent;
  border-bottom: 11px solid #a8c0dc;
}
.sheet tbody tr { height: 21px; }
.sheet tbody tr.h20 { height: 20px; }
.sheet tbody tr.h22 { height: 22px; }
.sheet tbody tr.h23 { height: 23px; }
.sheet tbody tr.h31 { height: 31px; }
.sheet tbody th {
  padding: 0 0 1px;
  font: 400 12px/15px "Liberation Sans", sans-serif;
  color: #3a4a5e;
  background: #e4ecf7;
  border-right: 1px solid #9eb6ce;
  border-bottom: 1px solid #9eb6ce;
  vertical-align: bottom;
}
.sheet td {
  padding: 0 0 0 4px;
  white-space: nowrap;
  vertical-align: bottom;
  line-height: 20px;
  letter-spacing: 0.2px;
  position: relative;
}
.sheet tr.up td { padding-bottom: 1px; }
.sheet td.center { text-align: center; padding-left: 0; }
.sheet td.right { text-align: right; padding-right: 4px; }
.sheet td.amount { padding-right: 8px; }
.sheet td.tight { padding-right: 2px; }
.sheet td.num { padding-left: 8px; letter-spacing: 0.6px; }
.sheet td.bold, .sheet td b { font-weight: 700; letter-spacing: 0; }
.navy { color: #17375e; }
.sheet td.caps { letter-spacing: -0.24px; }
.sheet td.note { padding-left: 3px; }
.sheet td.srno { padding-left: 7px; }
.sheet td.indent { padding-left: 17px; }
.sheet td.gcol { padding-left: 3px; }
.thick { border-bottom: 2px solid #000; }
.sheet td.lift { padding-bottom: 3px; }
.sheet td.recon-title { padding-bottom: 3px; }
.line { box-shadow: inset 0 -1px #000; }
.sheet td.dbl {
  padding-bottom: 1px;
  box-shadow: inset 0 -1px #000, inset 0 -2px #fff, inset 0 -3px #000;
}
.flag::before {
  content: "";
  position: absolute;
  left: 1px;
  top: 0;
  border-top: 5px solid #1d7a1d;
  border-right: 5px solid transparent;
}
sup {
  font-size: 10px;
  line-height: 0;
  vertical-align: baseline;
  position: relative;
  top: -6px;
}

/* Boxed reconciliation table */
.lead, .mid, .end { border-left: 1px solid #000; }
.end { border-right: 1px solid #000; }
.sheet td.lead { padding-left: 3px; }
.sheet td.mid.num, .sheet td.end.num { padding-left: 7px; }
.recon-head td.lead, .recon-head td.mid, .recon-head td.end {
  border-top: 1px solid #000;
  border-bottom: 1px solid #000;
}
.recon-rule td.lead, .recon-rule td.mid, .recon-rule td.end { border-bottom: 1px solid #000; }

/* Vertical scrollbar */
.vscroll {
  width: 20px;
  height: 520px;
  margin-top: 1px;
  flex: none;
  display: flex;
  flex-direction: column;
  align-items: flex-start;
  background: #b4cdf0;
}
.v-split {
  width: 15px;
  height: 7px;
  margin-left: 1px;
  background: #fff;
  border: 1px solid #6f8bb4;
}
.v-arrow {
  width: 16px;
  height: 18px;
  background: #7f9bc7;
  display: flex;
  align-items: center;
  justify-content: center;
}
.arrow-up { border: 5px solid transparent; border-bottom: 5px solid #31486e; border-top: 0; }
.arrow-down { border: 5px solid transparent; border-top: 5px solid #31486e; border-bottom: 0; }
.v-thumb {
  width: 16px;
  height: 107px;
  display: flex;
  align-items: center;
  justify-content: center;
  background: linear-gradient(90deg, #e7eef6, #c6d3e2);
  border: 1px solid #5c78a6;
  border-radius: 2px;
}
.grip {
  width: 8px;
  height: 8px;
  background: repeating-linear-gradient(#6d7f96 0 1px, transparent 1px 3px);
}
.v-track { width: 16px; flex: 1; background: #9db5da; }
.v-arrow-down { height: 13px; }

/* Sheet tabs and horizontal scrollbar */
.sheetbar {
  height: 20px;
  flex: none;
  display: flex;
  align-items: stretch;
  background: linear-gradient(#7f9bc7, #a6bddf 20%, #a0b8dc);
}
.sheet-nav {
  width: 55px;
  display: flex;
  align-items: center;
  background: #d9e6f7;
}
.sheet-tabs { display: flex; }
.sheet-tab {
  height: 20px;
  position: relative;
  line-height: 19px;
  font-size: 12px;
  white-space: nowrap;
  background: linear-gradient(#e3edfa, #c3d7f2);
  border-top: 1px solid #87a2c4;
  letter-spacing: 0.2px;
}
.sheet-tab::after {
  content: "";
  position: absolute;
  top: -1px;
  right: -10px;
  width: 18px;
  height: 20px;
  transform: skewX(-40deg);
  background: linear-gradient(#e3edfa, #c3d7f2);
  border-right: 1px solid #7c98c0;
  border-top: 1px solid #87a2c4;
  z-index: -1;
}
.st-data { width: 85px; padding-left: 20px; z-index: 8; }
.st-bs { width: 32px; padding-left: 18px; z-index: 7; }
.st-pl { width: 47px; padding-left: 18px; z-index: 6; }
.sheet-tab-on {
  width: 38px;
  padding-left: 19px;
  z-index: 9;
  font-weight: 700;
  background: #fff;
  border-top-color: #fff;
}
.sheet-tab-on::after { background: #fff; border-top-color: #fff; }
.st-22 { width: 77px; padding-left: 19px; z-index: 5; }
.st-29 { width: 85px; padding-left: 20px; z-index: 4; }
.st-216 { width: 93px; padding-left: 22px; z-index: 3; }
.st-new { width: 42px; padding-left: 22px; padding-top: 3px; z-index: 2; }
.hscroll {
  margin-left: auto;
  width: 171px;
  display: flex;
  align-items: center;
  padding-left: 1px;
}
.h-split {
  width: 7px;
  height: 15px;
  background: #fff;
  border: 1px solid #6f8bb4;
}
.arrow-left { margin-left: 5px; border: 5px solid transparent; border-right: 5px solid #31486e; border-left: 0; }
.arrow-right { margin-left: 23px; margin-right: 10px; border: 5px solid transparent; border-left: 5px solid #31486e; border-right: 0; }
.h-thumb {
  margin-left: 8px;
  width: 83px;
  height: 16px;
  display: flex;
  align-items: center;
  justify-content: center;
  background: linear-gradient(#e7eef6, #c6d3e2);
  border: 1px solid #6f8bb4;
  border-radius: 2px;
}
.grip-v {
  width: 7px;
  height: 7px;
  background: repeating-linear-gradient(90deg, #6d7f96 0 1px, transparent 1px 2px);
}

/* Status bar */
.statusbar {
  height: 20px;
  flex: none;
  display: flex;
  align-items: center;
  border-top: 1px solid #7f9bc7;
  background: linear-gradient(#dbe7f8, #c4d8f4 45%, #b4cbee 50%, #cfe0f7);
}
.st-ready { width: 41px; padding-left: 7px; line-height: 16px; height: 19px; border-right: 1px solid #a4bcdc; }
.st-macro {
  width: 40px;
  height: 19px;
  padding-left: 15px;
  display: flex;
  align-items: center;
  border-right: 1px solid #a4bcdc;
}
.st-count { margin-left: auto; width: 55px; font-size: 11px; color: #1b2f63; }
.st-right {
  width: 244px;
  height: 19px;
  display: flex;
  align-items: center;
  padding-left: 6px;
  border-left: 1px solid #8aa4c8;
  background: linear-gradient(#d3e2f6, #b7cdee 50%, #c8daf3);
}
.views {
  width: 56px;
  height: 18px;
  flex: none;
  display: flex;
  border: 1px solid #8fa7c8;
  border-radius: 2px;
}
.view {
  flex: 1;
  display: flex;
  align-items: center;
  justify-content: center;
}
.view-on { background: linear-gradient(#fde8b4, #fdc860); }
.zoom-pct { margin-left: 8px; width: 34px; flex: none; color: #1b2f63; }
.zoom-btn {
  width: 15px;
  height: 15px;
  flex: none;
  border-radius: 50%;
  border: 1px solid #6f87a8;
  background: linear-gradient(#f4f7fb, #c4d0de);
  display: flex;
  align-items: center;
  justify-content: center;
  position: relative;
}
.zoom-btn i { width: 9px; height: 2px; background: #48596e; }
.zoom-plus::after {
  content: "";
  position: absolute;
  left: 5.5px;
  top: 2px;
  width: 2px;
  height: 9px;
  background: #48596e;
}
.zoom-track {
  width: 103px;
  height: 2px;
  flex: none;
  background: #f4f7fb;
  position: relative;
}
.zoom-thumb {
  position: absolute;
  left: 47px;
  top: -6px;
  width: 9px;
  height: 13px;
  background: linear-gradient(#f6f8fb, #b8c6d8);
  border: 1px solid #5f7898;
  border-radius: 1px 1px 4px 4px;
}

/* Windows taskbar */
.taskbar {
  height: 40px;
  flex: none;
  display: flex;
  align-items: stretch;
  background: linear-gradient(90deg, #1e3039, #1d2c3c 55%, #1c2a40);
}
.tb-start {
  width: 48px;
  display: flex;
  align-items: center;
  justify-content: center;
  padding-left: 3px;
}
.tb-search {
  width: 344px;
  display: flex;
  align-items: center;
  gap: 10px;
  padding-left: 14px;
  margin-top: 1px;
  background: #f0f0f0;
  font-size: 14px;
  color: #333;
}
.tb-item {
  width: 49px;
  display: flex;
  align-items: center;
  justify-content: center;
  position: relative;
}
.cortana-ring {
  width: 15px;
  height: 15px;
  border-radius: 50%;
  border: 2px solid #fff;
}
.tb-running::after {
  content: "";
  position: absolute;
  left: 4px;
  right: 4px;
  bottom: 0;
  height: 2px;
  background: #6fb7ea;
}
.tb-excel { background: #4b5c66; }
.tb-excel::after { left: 0; right: 0; }
.tb-ui-on { background: #a8622f; border-bottom: 2px solid #f97a10; }
.ui-logo {
  width: 24px;
  height: 24px;
  display: flex;
  align-items: center;
  justify-content: center;
  background: #0067df;
  color: #fff;
  font: 600 17px "Open Sans", sans-serif;
}
.ui-dark { background: #0a4a9c; }
.tray {
  margin-left: auto;
  display: flex;
  align-items: center;
  padding-right: 25px;
  color: #fff;
}
.tray-power { margin-left: 11px; }
.tray-cloud { margin-left: 8px; }
.tray-sound { margin-left: 8px; }
.clock {
  width: 72px;
  margin-left: 3px;
  display: flex;
  flex-direction: column;
  align-items: center;
  font-size: 12px;
  line-height: 19px;
}
.tray-note { margin-left: 12px; }
```
